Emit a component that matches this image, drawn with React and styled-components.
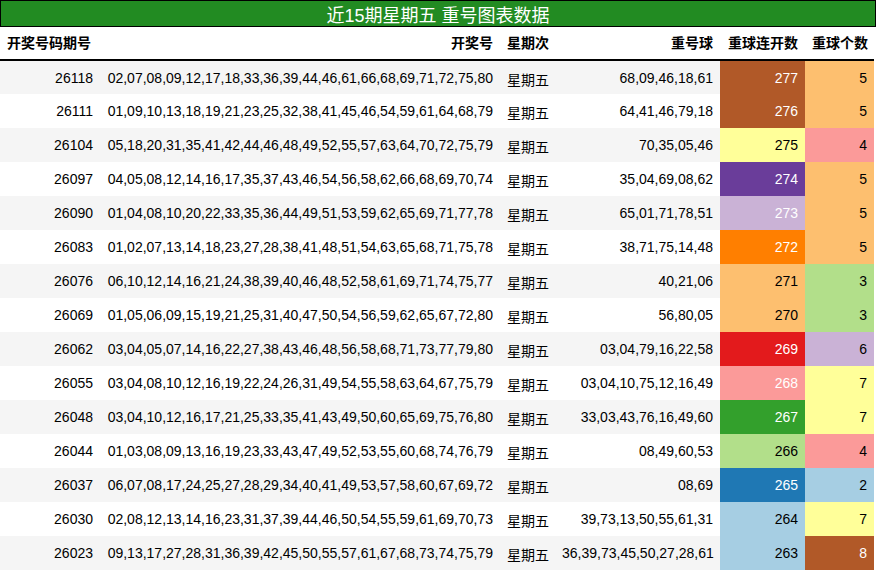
import styled, { createGlobalStyle } from 'styled-components';

const Global = createGlobalStyle`
  body{margin:0;background:#fff;font-family:"Liberation Sans","Noto Sans CJK SC",sans-serif;}
`;

const ROWS = [
  ['26118','02,07,08,09,12,17,18,33,36,39,44,46,61,66,68,69,71,72,75,80','68,09,46,18,61',277,5],
  ['26111','01,09,10,13,18,19,21,23,25,32,38,41,45,46,54,59,61,64,68,79','64,41,46,79,18',276,5],
  ['26104','05,18,20,31,35,41,42,44,46,48,49,52,55,57,63,64,70,72,75,79','70,35,05,46',275,4],
  ['26097','04,05,08,12,14,16,17,35,37,43,46,54,56,58,62,66,68,69,70,74','35,04,69,08,62',274,5],
  ['26090','01,04,08,10,20,22,33,35,36,44,49,51,53,59,62,65,69,71,77,78','65,01,71,78,51',273,5],
  ['26083','01,02,07,13,14,18,23,27,28,38,41,48,51,54,63,65,68,71,75,78','38,71,75,14,48',272,5],
  ['26076','06,10,12,14,16,21,24,38,39,40,46,48,52,58,61,69,71,74,75,77','40,21,06',271,3],
  ['26069','01,05,06,09,15,19,21,25,31,40,47,50,54,56,59,62,65,67,72,80','56,80,05',270,3],
  ['26062','03,04,05,07,14,16,22,27,38,43,46,48,56,58,68,71,73,77,79,80','03,04,79,16,22,58',269,6],
  ['26055','03,04,08,10,12,16,19,22,24,26,31,49,54,55,58,63,64,67,75,79','03,04,10,75,12,16,49',268,7],
  ['26048','03,04,10,12,16,17,21,25,33,35,41,43,49,50,60,65,69,75,76,80','33,03,43,76,16,49,60',267,7],
  ['26044','01,03,08,09,13,16,19,23,33,43,47,49,52,53,55,60,68,74,76,79','08,49,60,53',266,4],
  ['26037','06,07,08,17,24,25,27,28,29,34,40,41,49,53,57,58,60,67,69,72','08,69',265,2],
  ['26030','02,08,12,13,14,16,23,31,37,39,44,46,50,54,55,59,61,69,70,73','39,73,13,50,55,61,31',264,7],
  ['26023','09,13,17,27,28,31,36,39,42,45,50,55,57,61,67,68,73,74,75,79','36,39,73,45,50,27,28,61',263,8],
];

const STREAK = {
  277: ['#b15928', '#fff'], 276: ['#b15928', '#fff'], 275: ['#ffff99', '#000'],
  274: ['#6a3d9a', '#fff'], 273: ['#cab2d6', '#fff'], 272: ['#ff7f00', '#fff'],
  271: ['#fdbf6f', '#000'], 270: ['#fdbf6f', '#000'], 269: ['#e31a1c', '#fff'],
  268: ['#fb9a99', '#fff'], 267: ['#33a02c', '#fff'], 266: ['#b2df8a', '#000'],
  265: ['#1f78b4', '#fff'], 264: ['#a6cee3', '#000'], 263: ['#a6cee3', '#000'],
};
const COUNT = {
  2: ['#a6cee3', '#000'], 3: ['#b2df8a', '#000'], 4: ['#fb9a99', '#000'],
  5: ['#fdbf6f', '#000'], 6: ['#cab2d6', '#000'], 7: ['#ffff99', '#000'],
  8: ['#b15928', '#fff'],
};

const Wrap = styled.div`width:876px;`;
const Title = styled.div`
  height:25px;background:#228b22;border:1px solid #000;color:#fff;
  font-size:18px;display:flex;align-items:center;justify-content:center;
`;
const Table = styled.table`
  border-collapse:collapse;table-layout:fixed;width:874px;font-size:14px;color:#000;
`;
const HeadRow = styled.tr`height:33px;`;
const Th = styled.th`
  padding:0 7px;font-weight:bold;white-space:nowrap;line-height:16px;
  text-align:${p => p.$left ? 'left' : 'right'};border-bottom:2px solid #000;
`;
const Tr = styled.tr`height:34px;background:${p => p.$odd ? '#f5f5f5' : '#fff'};`;
const Td = styled.td`
  padding:0 7px;white-space:nowrap;text-align:right;line-height:16px;
  background:${p => p.$bg || 'transparent'};color:${p => p.$fg || '#000'};
`;
const Day = styled.td`padding:4px 7px 0;white-space:nowrap;text-align:left;line-height:16px;`;

export default function App() {
  return (
    <Wrap>
      <Global />
      <Title>近15期星期五 重号图表数据</Title>
      <Table>
        <colgroup>
          <col style={{ width: 100 }} /><col style={{ width: 400 }} /><col style={{ width: 55 }} />
          <col style={{ width: 165 }} /><col style={{ width: 85 }} /><col style={{ width: 69 }} />
        </colgroup>
        <thead>
          <HeadRow>
            <Th $left>开奖号码期号</Th><Th>开奖号</Th><Th $left>星期次</Th>
            <Th>重号球</Th><Th>重球连开数</Th><Th>重球个数</Th>
          </HeadRow>
        </thead>
        <tbody>
          {ROWS.map(([id, nums, rep, s, c], i) => (
            <Tr key={id} $odd={i % 2 === 0}>
              <Td>{id}</Td>
              <Td>{nums}</Td>
              <Day>星期五</Day>
              <Td>{rep}</Td>
              <Td $bg={STREAK[s][0]} $fg={STREAK[s][1]}>{s}</Td>
              <Td $bg={COUNT[c][0]} $fg={COUNT[c][1]}>{c}</Td>
            </Tr>
          ))}
        </tbody>
      </Table>
    </Wrap>
  );
}
